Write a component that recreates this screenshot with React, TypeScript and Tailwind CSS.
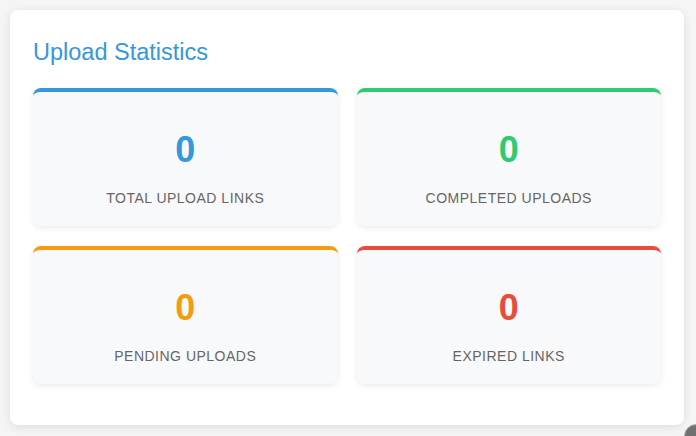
import React from "react";

const stats = [
  { label: "TOTAL UPLOAD LINKS", border: "border-t-[#3498db]", text: "text-[#3498db]" },
  { label: "COMPLETED UPLOADS", border: "border-t-[#2ecc71]", text: "text-[#2ecc71]" },
  { label: "PENDING UPLOADS", border: "border-t-[#f39c12]", text: "text-[#f39c12]" },
  { label: "EXPIRED LINKS", border: "border-t-[#e74c3c]", text: "text-[#e74c3c]" },
];

export default function App() {
  return (
    <div className="w-[696px] h-[436px] bg-[#f5f5f5] overflow-hidden relative" style={{ fontFamily: '"Liberation Sans", Arial, sans-serif' }}>
      <div className="pt-[10px] pl-[10px]">
        <div className="w-[674px] bg-white rounded-lg shadow-[0_2px_10px_rgba(0,0,0,0.1)] px-[23px] pt-[28px] pb-[41px]">
          <h2 className="text-[23.5px] leading-[28px] text-[#3498db] font-normal mb-[22px]">Upload Statistics</h2>
          <div className="grid grid-cols-2 gap-x-[19px] gap-y-[20px]">
            {stats.map((s) => (
              <div
                key={s.label}
                className={`bg-[#f8f9fa] rounded-lg border-t-4 ${s.border} shadow-[0_2px_6px_rgba(0,0,0,0.08)] pt-[37px] pb-[20px] flex flex-col items-center`}
              >
                <div className={`text-[36px] leading-[41px] font-bold ${s.text}`}>0</div>
                <div className="mt-[20px] text-[14px] leading-[16px] tracking-[0.5px] text-[#666]">{s.label}</div>
              </div>
            ))}
          </div>
        </div>
      </div>
      <div className="absolute left-[684px] top-[424px] w-6 h-6 rounded-full bg-[#707070] border border-[#b5b5b5]" />
    </div>
  );
}
